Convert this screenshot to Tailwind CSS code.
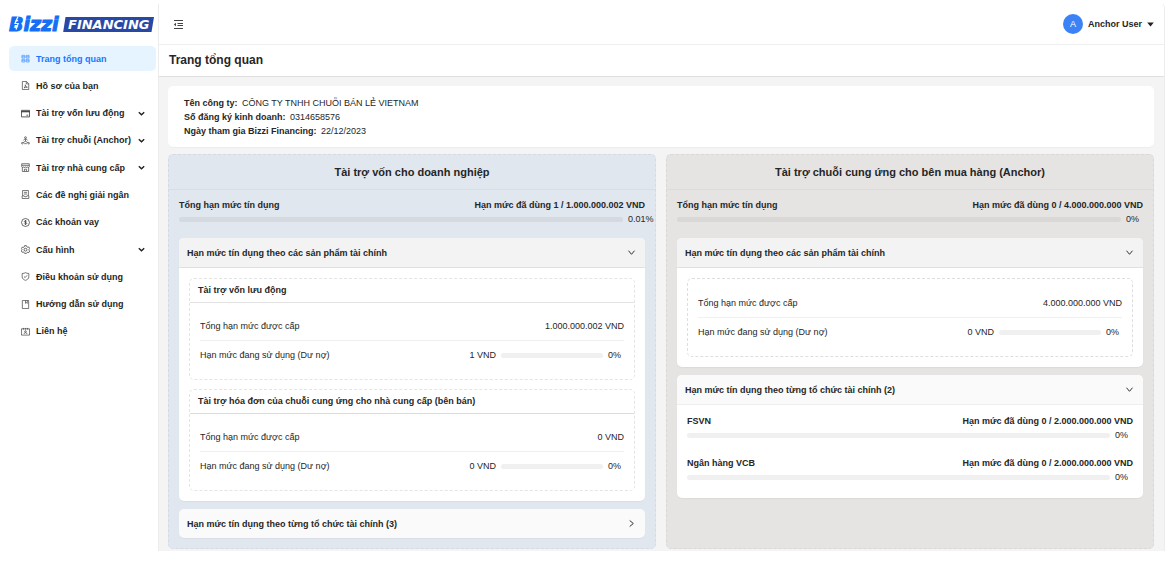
<!DOCTYPE html>
<html lang="vi">
<head>
<meta charset="utf-8">
<meta name="viewport" content="width=device-width, initial-scale=1">
<title>Bizzi Financing</title>
<script src="https://cdn.jsdelivr.net/npm/@tailwindcss/browser@4"></script>
</head>
<body class="bg-white pt-1 pr-[11px] font-['Liberation_Sans',Arial,sans-serif] text-[9px] leading-[14px] text-[#262626]">
<div class="flex">
  <!-- Sidebar -->
  <aside class="w-[158px] shrink-0">
    <a href="#" aria-label="Bizzi Financing" class="block pt-2 pl-[7px]">
      <svg class="block h-6 w-[150px] overflow-visible" viewBox="0 0 150 24">
        <text x="2" y="19" font-family="DejaVu Sans" font-weight="700" font-style="italic" font-size="19" fill="#146ff5" stroke="#146ff5" stroke-width="1">Bizzi</text>
        <path d="M11 4.500 8 11.500h3.200L9 17.500" fill="none" stroke="#fff" stroke-width="1.200"/>
        <path d="M58.500 5H147l-2.500 15H56.200Z" fill="#2748a5"/>
        <text x="61" y="17" font-family="DejaVu Sans" font-weight="700" font-style="italic" font-size="13" fill="#fff">FINANCING</text>
      </svg>
    </a>
    <nav class="mt-[9px] mr-[2px] ml-[9px] grid h-[300px] auto-rows-fr font-bold text-[#1f1f1f]">
      <a href="#" aria-current="page" class="my-px flex items-center gap-[6px] rounded-[5px] bg-[#e6f4ff] pr-2 pl-3 text-[#1677ff]">
        <svg class="size-[9px] text-[#4c96ff]" viewBox="0 0 10 10" fill="none" stroke="currentColor" stroke-width=".8"><path d="M1 1.500h3.300v3H1zM5.700 1.500H9v3H5.700zM1 5.900h3.300v3H1zM5.700 5.900H9v3H5.700zM1 3h3.300M5.700 3H9M1 7.400h3.300M5.700 7.400H9"/></svg>
        Trang tổng quan</a>
      <a href="#" class="flex items-center gap-[6px] pr-2 pl-3">
        <svg class="size-[9px] text-[#444]" viewBox="0 0 10 10" fill="none" stroke="currentColor" stroke-width=".8"><path d="M1.500.5h4.600l2.500 2.500v6.500H1.500zM5.900.5v2.700h2.700M3.300 7.700c1.500-1 1.700-2.500 1.500-3.500 0 1.500 1 2.500 2.300 2.700-1.500-.2-2.800.2-3.800.8"/></svg>
        Hồ sơ của bạn</a>
      <a href="#" class="flex items-center gap-[6px] pr-[11px] pl-3">
        <svg class="size-[9px] text-[#333]" viewBox="0 0 10 10" fill="none" stroke="currentColor" stroke-width=".9"><path d="M.5 1.500h9v7.300h-9z"/><path d="M.5 3h9" stroke-width="1.300"/><path d="M6 6.900h2"/></svg>
        <span class="flex-1">Tài trợ vốn lưu động</span>
        <svg class="size-[7px]" viewBox="0 0 7 7" fill="none" stroke="currentColor" stroke-width="1.400"><path d="m.8 2.200 2.700 2.500 2.700-2.500"/></svg></a>
      <a href="#" class="flex items-center gap-[6px] pr-[11px] pl-3">
        <svg class="size-[9px] text-[#444]" viewBox="0 0 10 10" fill="none" stroke="currentColor" stroke-width=".8"><circle cx="5" cy="1.800" r="1"/><circle cx="1.500" cy="8" r=".9"/><circle cx="8.500" cy="8" r=".9"/><path d="M5 2.800v3L2.200 7.500M5 5.800l2.800 1.700M4.200 3 3 4.900M5.800 3 7 4.900M3.600 8.500h2.800"/></svg>
        <span class="flex-1">Tài trợ chuỗi (Anchor)</span>
        <svg class="size-[7px]" viewBox="0 0 7 7" fill="none" stroke="currentColor" stroke-width="1.400"><path d="m.8 2.200 2.700 2.500 2.700-2.500"/></svg></a>
      <a href="#" class="flex items-center gap-[6px] pr-[11px] pl-3">
        <svg class="size-[9px] text-[#444]" viewBox="0 0 10 10" fill="none" stroke="currentColor" stroke-width=".8"><path d="M.8.800h8.400v3.400c0 1-2 1-2.100 0 0 1-2.100 1-2.100 0 0 1-2.100 1-2.100 0 0 1-2.100 1-2.100 0zM.8 2.600h8.400M1.500 5v4.400h7V5M3.800 9.400V6.900h2.400v2.500"/></svg>
        <span class="flex-1">Tài trợ nhà cung cấp</span>
        <svg class="size-[7px]" viewBox="0 0 7 7" fill="none" stroke="currentColor" stroke-width="1.400"><path d="m.8 2.200 2.700 2.500 2.700-2.500"/></svg></a>
      <a href="#" class="flex items-center gap-[6px] pr-2 pl-3">
        <svg class="size-[9px] text-[#444]" viewBox="0 0 10 10" fill="none" stroke="currentColor" stroke-width=".8"><path d="M1.800 6.500v-6h6.400v6M3.300 2.600h3.400M3.300 4.500h3.400M1.300 6.500h2.200l.5 1h2l.5-1h2.200v3H1.300z"/></svg>
        Các đề nghị giải ngân</a>
      <a href="#" class="flex items-center gap-[6px] pr-2 pl-3">
        <svg class="size-[9px] text-[#333]" viewBox="0 0 10 10" fill="none" stroke="currentColor" stroke-width=".8"><circle cx="5" cy="5" r="4.400"/><path d="M6.400 3.800C6 2.800 3.700 2.900 3.700 4c0 1.200 2.700.7 2.700 2 0 1.200-2.500 1.200-2.800.1M5 2.300v5.400"/></svg>
        Các khoản vay</a>
      <a href="#" class="flex items-center gap-[6px] pr-[11px] pl-3">
        <svg class="size-[9px] text-[#333]" viewBox="0 0 10 10" fill="none" stroke="currentColor" stroke-width=".8"><path d="M4 .7h2l.4 1.200 1.100.6 1.200-.3 1 1.700-.8.900v1l.8.900-1 1.700-1.200-.3-1.100.6L6 9.300H4l-.4-.9-1.100-.6-1.200.3-1-1.700.8-.9V5L.3 4.100l1-1.700 1.200.3 1.100-.6z"/><circle cx="5" cy="5.200" r="1.600"/></svg>
        <span class="flex-1">Cấu hình</span>
        <svg class="size-[7px]" viewBox="0 0 7 7" fill="none" stroke="currentColor" stroke-width="1.400"><path d="m.8 2.200 2.700 2.500 2.700-2.500"/></svg></a>
      <a href="#" class="flex items-center gap-[6px] pr-2 pl-3">
        <svg class="size-[9px] text-[#444]" viewBox="0 0 10 10" fill="none" stroke="currentColor" stroke-width=".8"><path d="M5 .7c1 .8 2.200.9 3.700.9v4C8.700 7.400 7 8.500 5 9.300 3 8.500 1.300 7.400 1.300 5.600v-4C2.800 1.600 4 1.500 5 .7ZM3.300 5l1.300 1.200 2.200-2.500"/></svg>
        Điều khoản sử dụng</a>
      <a href="#" class="flex items-center gap-[6px] pr-2 pl-3">
        <svg class="size-[9px] text-[#444]" viewBox="0 0 10 10" fill="none" stroke="currentColor" stroke-width=".8"><path d="M1.500.5h7v9h-7zM5 .5v3.200l1-.8 1 .8V.5"/></svg>
        Hướng dẫn sử dụng</a>
      <a href="#" class="flex items-center gap-[6px] pr-2 pl-3">
        <svg class="size-[9px] text-[#444]" viewBox="0 0 10 10" fill="none" stroke="currentColor" stroke-width=".8"><path d="M.5 2h9v7h-9zM2.700 1v2M5 1v2M7.300 1v2M3.400 7.700c0-2 3.200-2 3.200 0"/><circle cx="5" cy="5" r=".9"/></svg>
        Liên hệ</a>
    </nav>
  </aside>

  <div class="min-w-0 flex-1 rounded-tr-[4px] border-r border-l border-[#ececec] bg-[#f4f4f4]">
    <!-- Top bar -->
    <header class="flex h-10 items-center justify-between rounded-tr-[4px] bg-white pr-[10px] pl-[14px]">
      <button type="button" aria-label="Thu gọn menu">
        <svg class="block size-[11px]" viewBox="0 0 11 11" fill="none" stroke="#444" stroke-width="1"><path d="M1 1.500h9M4.500 4.500H10M4.500 6.500H10M1 9.500h9"/><path d="M3 3.700v3.600L.8 5.500z" fill="#444" stroke="none"/></svg>
      </button>
      <button type="button" class="flex items-center gap-[5px] font-bold">
        <span class="flex size-5 items-center justify-center rounded-full bg-[#3b82f6] font-normal text-white">A</span>
        Anchor User
        <svg class="h-[5px] w-[7px]" viewBox="0 0 7 5"><path d="M.2.500h6.600L3.500 4.500z" fill="#222"/></svg>
      </button>
    </header>
    <div class="flex h-[33px] items-center border-t border-b border-t-[#f0f0f0] border-b-[#e0e0e0] bg-white pb-px pl-[10px]">
      <h1 class="text-xs font-bold">Trang tổng quan</h1>
    </div>

    <main class="pt-[9px] pr-[10px] pb-[2px] pl-[9px]">
      <section class="rounded-[5px] bg-white px-4 pt-[10px] pb-[9px] shadow-[0_1px_1px_#00000008]">
        <p><strong>Tên công ty:</strong>&ensp;CÔNG TY TNHH CHUỖI BÁN LẺ VIETNAM</p>
        <p><strong>Số đăng ký kinh doanh:</strong>&ensp;0314658576</p>
        <p><strong>Ngày tham gia Bizzi Financing:</strong>&ensp;22/12/2023</p>
      </section>

      <div class="mt-[7px] grid grid-cols-2 gap-[10px]">
        <!-- Business funding -->
        <section class="rounded-[5px] border border-dashed border-[#d6dae3] bg-[#e1e7ef] pb-[10px]">
          <h2 class="flex h-[35px] items-center justify-center border-b border-[#d9dee6] text-[11px] font-bold">Tài trợ vốn cho doanh nghiệp</h2>
          <div class="px-[10px] pt-2">
            <div class="flex justify-between font-bold"><span>Tổng hạn mức tín dụng</span><span>Hạn mức đã dùng 1 / 1.000.000.002 VND</span></div>
            <div class="-mr-2 flex items-center gap-[5px]"><div role="progressbar" aria-label="Tổng hạn mức tín dụng" aria-valuenow="0" class="h-[5px] flex-1 rounded-full bg-[#d5d9e0]"></div><span class="w-[25px]">0.01%</span></div>

            <div class="mt-3 rounded-[5px] bg-white shadow-[0_1px_1px_#0000000a]">
              <button type="button" aria-expanded="true" class="flex h-[30px] w-full items-center justify-between rounded-t-[5px] border-b border-[#e0e0e0] bg-[#f3f3f3] px-2 font-bold">Hạn mức tín dụng theo các sản phẩm tài chính
                <svg class="mr-px size-[9px]" viewBox="0 0 9 9" fill="none" stroke="#333" stroke-width="1"><path d="m1.500 2.700 3 3.600 3-3.600"/></svg></button>
              <div class="flex flex-col gap-[9px] p-[10px]">
                <div class="rounded-[5px] border border-dashed border-[#e4e4e4] pb-[17px]">
                  <h3 class="border-b border-[#e4e4e4] px-2 pt-1 pb-[5px] font-bold">Tài trợ vốn lưu động</h3>
                  <div class="mx-[10px] mt-[7px] flex h-[31px] items-center justify-between border-b border-[#f0f0f0] pt-px"><span>Tổng hạn mức được cấp</span><span>1.000.000.002 VND</span></div>
                  <div class="mx-[10px] flex items-center pt-[7px]"><span class="flex-1">Hạn mức đang sử dụng (Dư nợ)</span><span>1 VND</span><div role="progressbar" aria-label="Dư nợ" aria-valuenow="0" class="mx-[5px] h-[5px] w-[102px] rounded-full bg-[#f0f0f0]"></div><span class="w-4">0%</span></div>
                </div>
                <div class="rounded-[5px] border border-dashed border-[#e4e4e4] pb-[17px]">
                  <h3 class="border-b border-[#d9dddd] px-2 pt-1 pb-[5px] font-bold">Tài trợ hóa đơn của chuỗi cung ứng cho nhà cung cấp (bên bán)</h3>
                  <div class="mx-[10px] mt-[7px] flex h-[31px] items-center justify-between border-b border-[#f0f0f0] pt-px"><span>Tổng hạn mức được cấp</span><span>0 VND</span></div>
                  <div class="mx-[10px] flex items-center pt-[7px]"><span class="flex-1">Hạn mức đang sử dụng (Dư nợ)</span><span>0 VND</span><div role="progressbar" aria-label="Dư nợ" aria-valuenow="0" class="mx-[5px] h-[5px] w-[102px] rounded-full bg-[#f0f0f0]"></div><span class="w-4">0%</span></div>
                </div>
              </div>
            </div>

            <button type="button" aria-expanded="false" class="mt-2 flex h-[29px] w-full items-center justify-between rounded-[5px] bg-[#fafafa] px-2 font-bold shadow-[0_1px_1px_#0000000a]">Hạn mức tín dụng theo từng tổ chức tài chính (3)
              <svg class="mr-px size-[9px]" viewBox="0 0 9 9" fill="none" stroke="#333" stroke-width="1"><path d="m2.700 1.500 3.600 3-3.600 3"/></svg></button>
          </div>
        </section>

        <!-- Supply chain funding -->
        <section class="rounded-[5px] border border-dashed border-[#d8d8da] bg-[#e5e4e2] pb-[10px]">
          <h2 class="flex h-[35px] items-center justify-center border-b border-[#dcdcdc] text-[11px] font-bold">Tài trợ chuỗi cung ứng cho bên mua hàng (Anchor)</h2>
          <div class="px-[10px] pt-2">
            <div class="flex justify-between font-bold"><span>Tổng hạn mức tín dụng</span><span>Hạn mức đã dùng 0 / 4.000.000.000 VND</span></div>
            <div class="-mr-2 flex items-center gap-[5px]"><div role="progressbar" aria-label="Tổng hạn mức tín dụng" aria-valuenow="0" class="h-[5px] flex-1 rounded-full bg-[#d9d8d6]"></div><span class="w-[25px]">0%</span></div>

            <div class="mt-3 rounded-[5px] bg-white shadow-[0_1px_1px_#0000000a]">
              <button type="button" aria-expanded="true" class="flex h-[30px] w-full items-center justify-between rounded-t-[5px] border-b border-[#e0e0e0] bg-[#f3f3f3] px-2 font-bold">Hạn mức tín dụng theo các sản phẩm tài chính
                <svg class="mr-px size-[9px]" viewBox="0 0 9 9" fill="none" stroke="#333" stroke-width="1"><path d="m1.500 2.700 3 3.600 3-3.600"/></svg></button>
              <div class="p-[10px]">
                <div class="rounded-[5px] border border-dashed border-[#dedee2] pt-2 pb-[17px]">
                  <div class="mx-[10px] flex h-[31px] items-center justify-between border-b border-[#f0f0f0] pt-px"><span>Tổng hạn mức được cấp</span><span>4.000.000.000 VND</span></div>
                  <div class="mx-[10px] flex items-center pt-[7px]"><span class="flex-1">Hạn mức đang sử dụng (Dư nợ)</span><span>0 VND</span><div role="progressbar" aria-label="Dư nợ" aria-valuenow="0" class="mx-[5px] h-[5px] w-[102px] rounded-full bg-[#f0f0f0]"></div><span class="w-4">0%</span></div>
                </div>
              </div>
            </div>

            <div class="mt-2 rounded-[5px] bg-white shadow-[0_1px_1px_#0000000a]">
              <button type="button" aria-expanded="true" class="flex h-[30px] w-full items-center justify-between rounded-t-[5px] border-b border-[#eeeeee] bg-[#fafafa] px-2 font-bold">Hạn mức tín dụng theo từng tổ chức tài chính (2)
                <svg class="mr-px size-[9px]" viewBox="0 0 9 9" fill="none" stroke="#333" stroke-width="1"><path d="m1.500 2.700 3 3.600 3-3.600"/></svg></button>
              <div class="flex flex-col gap-[14px] px-[10px] pt-[9px] pb-[14px]">
                <div>
                  <div class="flex justify-between font-bold"><span>FSVN</span><span>Hạn mức đã dùng 0 / 2.000.000.000 VND</span></div>
                  <div class="flex items-center gap-[5px]"><div role="progressbar" aria-label="FSVN" aria-valuenow="0" class="h-[5px] flex-1 rounded-full bg-[#f0f0f0]"></div><span class="w-[18px]">0%</span></div>
                </div>
                <div>
                  <div class="flex justify-between font-bold"><span>Ngân hàng VCB</span><span>Hạn mức đã dùng 0 / 2.000.000.000 VND</span></div>
                  <div class="flex items-center gap-[5px]"><div role="progressbar" aria-label="Ngân hàng VCB" aria-valuenow="0" class="h-[5px] flex-1 rounded-full bg-[#f0f0f0]"></div><span class="w-[18px]">0%</span></div>
                </div>
              </div>
            </div>
          </div>
        </section>
      </div>
    </main>
  </div>
</div>
</body>
</html>
